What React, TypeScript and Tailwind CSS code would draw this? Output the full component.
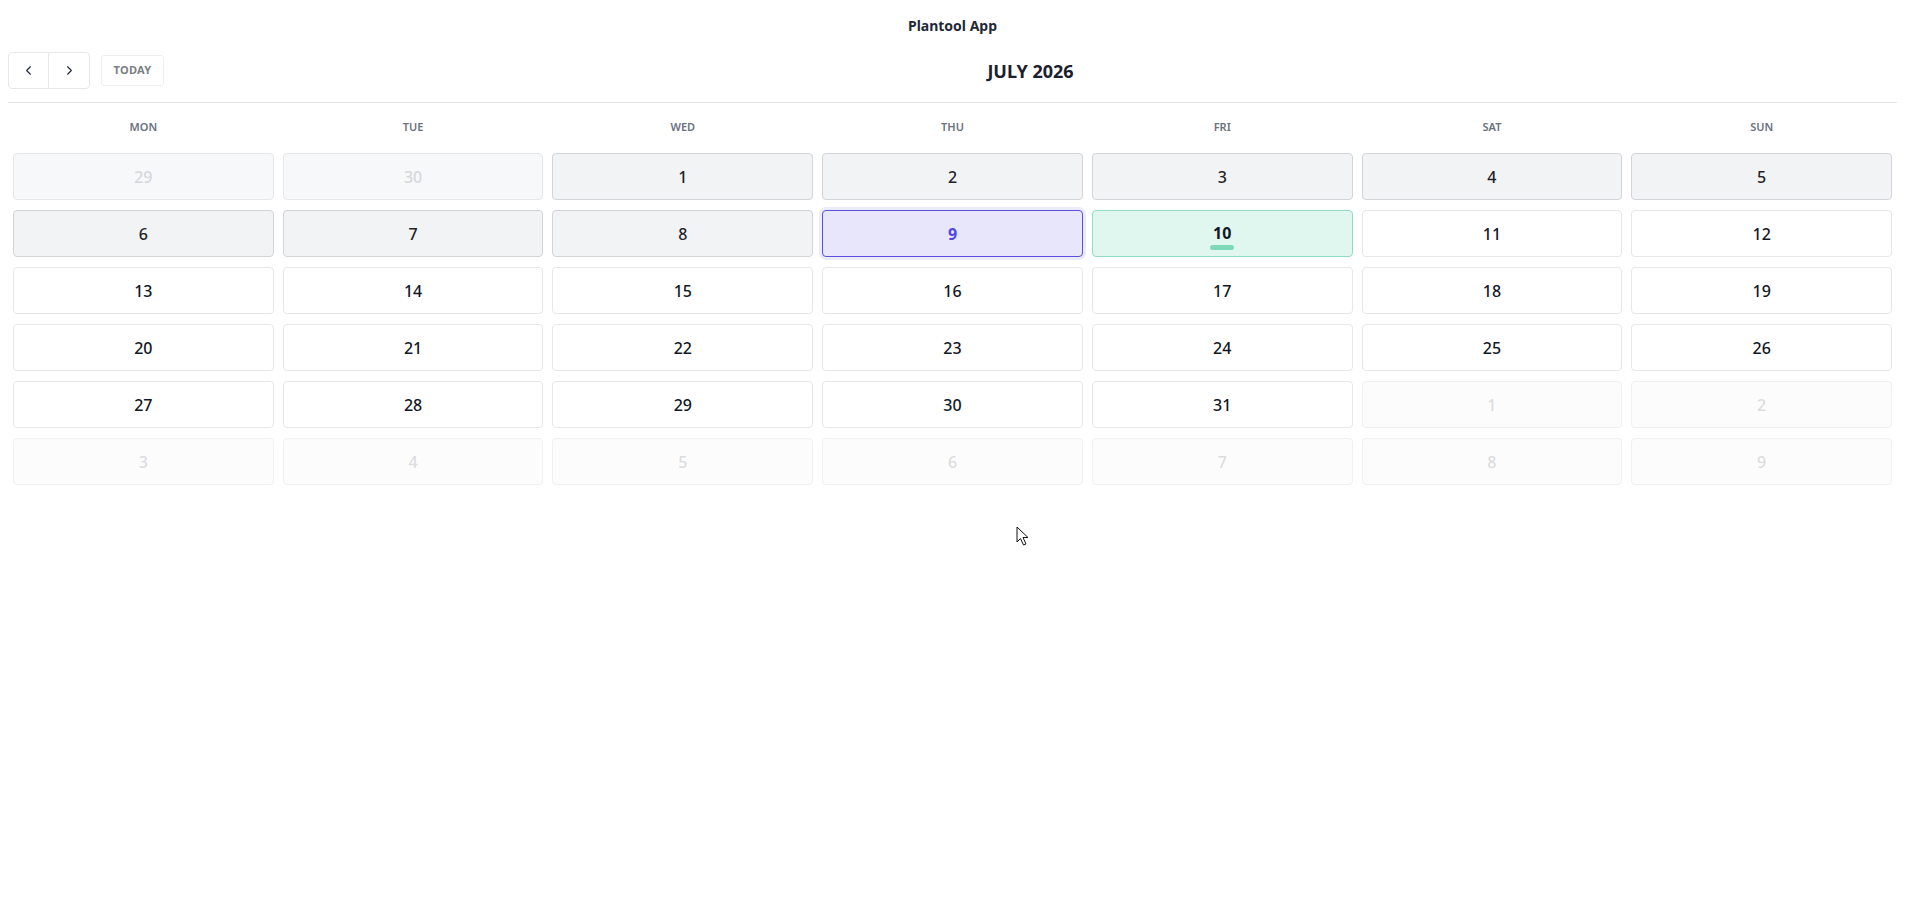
import { ChevronLeft, ChevronRight } from "lucide-react";

type Day = {
  n: number;
  kind: "prev" | "next" | "past" | "selected" | "today" | "future";
};

const weekdays = ["Mon", "Tue", "Wed", "Thu", "Fri", "Sat", "Sun"];

function buildDays(): Day[] {
  const days: Day[] = [
    { n: 29, kind: "prev" },
    { n: 30, kind: "prev" },
  ];
  for (let d = 1; d <= 31; d++) {
    let kind: Day["kind"] = "future";
    if (d < 9) kind = "past";
    else if (d === 9) kind = "selected";
    else if (d === 10) kind = "today";
    days.push({ n: d, kind });
  }
  for (let d = 1; d <= 9; d++) days.push({ n: d, kind: "next" });
  return days;
}

const cellStyles: Record<Day["kind"], string> = {
  prev: "bg-[#f7f8f9] border-[#e6e7e9] text-[#d5d7db] font-medium",
  next: "bg-[#fcfcfc] border-[#f0f0f1] text-[#dcdde0] font-medium",
  past: "bg-[#f2f3f5] border-[#d2d4d8] text-[#1f2328] font-medium",
  selected:
    "bg-[#e8e6fb] border-[#5b50d6] text-[#4f46e5] font-bold ring-[3px] ring-[#ecebfb]",
  today: "bg-[#dff7ee] border-[#92dcc2] text-[#111827] font-bold",
  future: "bg-white border-[#e5e7eb] text-[#111827] font-medium",
};

function DayCell({ day }: { day: Day }) {
  return (
    <div
      className={`h-[47px] rounded-[4px] border flex flex-col items-center justify-center text-base ${cellStyles[day.kind]}`}
    >
      <span className="leading-5">{day.n}</span>
      {day.kind === "today" && (
        <span className="mt-[2px] -mb-[6px] h-[5px] w-[24px] rounded-full bg-[#7ed9b8]" />
      )}
    </div>
  );
}

export default function App() {
  const days = buildDays();

  return (
    <div className="relative min-h-screen w-[1905px] bg-white font-['Noto_Sans',sans-serif] text-[#111827]">
      <h1 className="pt-4 text-center text-sm font-bold leading-5 text-[#1f2937]">
        Plantool App
      </h1>

      <div className="px-2">
        {/* Toolbar */}
        <div className="mt-4 flex items-center border-b border-[#e5e7eb] pb-[13px]">
          <div className="flex">
            <button className="flex h-[37px] w-[41px] items-center justify-center rounded-l-[4px] border border-[#e5e7eb] text-[#1f2937]">
              <ChevronLeft size={15} strokeWidth={1.75} />
            </button>
            <button className="-ml-px flex h-[37px] w-[42px] items-center justify-center rounded-r-[4px] border border-[#e5e7eb] text-[#1f2937]">
              <ChevronRight size={15} strokeWidth={1.75} />
            </button>
          </div>
          <button className="ml-[11px] h-[31px] w-[63px] rounded-[3px] border border-[#eeeff1] text-[11px] font-bold tracking-wide text-[#7b7f86]">
            TODAY
          </button>
          <h2 className="flex-1 text-center text-lg font-bold text-[#1a202c]">
            JULY 2026
          </h2>
        </div>

        {/* Weekday header */}
        <div className="grid grid-cols-7 gap-x-[9px] px-[5px] pt-4 pb-[18px]">
          {weekdays.map((w) => (
            <div
              key={w}
              className="text-center text-[11px] font-semibold uppercase leading-4 text-[#6b7280]"
            >
              {w}
            </div>
          ))}
        </div>

        {/* Month grid */}
        <div className="grid grid-cols-7 gap-x-[9px] gap-y-[10px] px-[5px]">
          {days.map((d, i) => (
            <DayCell key={i} day={d} />
          ))}
        </div>
      </div>

      {/* Mouse pointer */}
      <svg
        className="absolute left-[1016px] top-[526px]"
        width="14"
        height="21"
        viewBox="0 0 14 21"
      >
        <path
          d="M1 1 L1 16 L4.5 12.5 L7.5 19 L10 18 L7 11.5 L12 11.5 Z"
          fill="white"
          stroke="#111"
          strokeWidth="1"
          strokeLinejoin="round"
        />
      </svg>
    </div>
  );
}
